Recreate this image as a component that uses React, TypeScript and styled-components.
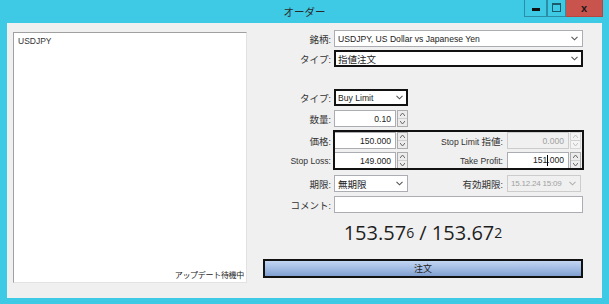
import React from "react";
import styled, { createGlobalStyle } from "styled-components";

const GlobalStyle = createGlobalStyle`
  html, body {
    margin: 0;
    padding: 0;
    background: #ffffff;
  }
  body {
    font-family: "Liberation Sans", "Noto Sans CJK JP", sans-serif;
    font-size: 8.6px;
    color: #333;
  }
`;

const Window = styled.div`
  width: 609px;
  height: 304px;
  box-sizing: border-box;
  background: #3ec9e5;
  display: flex;
  flex-direction: column;
  padding: 0 7px 6px 7px;
`;

const TitleBar = styled.div`
  height: 23px;
  display: flex;
  align-items: flex-start;
  position: relative;
`;

const Title = styled.div`
  flex: 1;
  text-align: center;
  line-height: 24px;
  font-size: 10.5px;
  color: #2a2a2a;
  font-family: "Noto Sans CJK JP", sans-serif;
`;

const Controls = styled.div`
  position: absolute;
  right: -1px;
  top: 0;
  display: flex;
  height: 17px;
`;

const CtrlButton = styled.div<{ $w: number; $close?: boolean }>`
  width: ${(p) => p.$w}px;
  height: 17px;
  box-sizing: border-box;
  border: 1px solid ${(p) => (p.$close ? "#b5453f" : "#2a8ea6")};
  border-top: none;
  border-left: ${(p) => (p.$close ? "none" : "1px solid #2a8ea6")};
  background: ${(p) => (p.$close ? "#c9534d" : "#3ec9e5")};
  display: flex;
  align-items: center;
  justify-content: center;
  color: #1a1a1a;
  font-weight: bold;
  font-size: 11px;
  padding-bottom: 1px;
`;

const MinBar = styled.div`
  width: 8px;
  height: 3px;
  background: #111;
  margin-top: 4px;
`;

const MaxBox = styled.div`
  width: 7px;
  height: 6px;
  border: 1px solid #1a5c6c;
  border-top-width: 2px;
`;

const Body = styled.div`
  flex: 1;
  background: #f0f0f0;
  display: flex;
  padding: 9px 19px 0 6px;
`;

const QuotePanel = styled.div`
  width: 234px;
  height: 251px;
  box-sizing: border-box;
  background: #ffffff;
  border: 1px solid #e2e2e2;
  border-top-color: #a0a0a0;
  border-left-color: #a0a0a0;
  display: flex;
  flex-direction: column;
  justify-content: space-between;
  padding: 3px 2px 2px 4px;
`;

const Symbol = styled.div`
  font-size: 8.5px;
  color: #333;
`;

const Status = styled.div`
  align-self: flex-end;
  font-size: 8px;
  color: #222;
  font-family: "Noto Sans CJK JP", sans-serif;
  letter-spacing: -0.3px;
`;

const Jp = styled.span`
  font-family: "Noto Sans CJK JP", sans-serif;
  font-size: 9.5px;
`;

const Form = styled.div`
  margin-left: 16px;
  margin-top: -2px;
  width: 320px;
  display: flex;
  flex-direction: column;
`;

const Row = styled.div<{ $mt?: number }>`
  display: flex;
  align-items: center;
  height: 17px;
  margin-top: ${(p) => p.$mt ?? 0}px;
`;

const Label = styled.div<{ $w?: number }>`
  width: ${(p) => p.$w ?? 71}px;
  flex: none;
  box-sizing: border-box;
  padding-right: ${(p) => (p.$w ? 4 : 3)}px;
  text-align: right;
  white-space: nowrap;
  color: #333;
`;

const Field = styled.div<{ $w?: number; $focus?: boolean; $disabled?: boolean }>`
  width: ${(p) => (p.$w ? `${p.$w}px` : "auto")};
  flex: ${(p) => (p.$w ? "none" : "1")};
  height: 17px;
  box-sizing: border-box;
  border: ${(p) => (p.$focus ? "2px solid #111" : p.$disabled ? "1px solid #cccccc" : "1px solid #abadb3")};
  background: ${(p) => (p.$disabled ? "#f0f0f0" : "#ffffff")};
  color: ${(p) => (p.$disabled ? "#a0a0a0" : "#222")};
  display: flex;
  align-items: center;
  padding: 0 ${(p) => (p.$focus ? 3 : 4)}px 0 ${(p) => (p.$focus ? 2 : 3)}px;
  white-space: nowrap;
  overflow: hidden;
`;

const FieldText = styled.span<{ $right?: boolean; $tight?: boolean }>`
  flex: 1;
  text-align: ${(p) => (p.$right ? "right" : "left")};
  font-size: ${(p) => (p.$tight ? "8px" : "inherit")};
  letter-spacing: ${(p) => (p.$tight ? "-0.2px" : "0")};
`;

const Caret = styled.span`
  display: inline-block;
  width: 1px;
  height: 11px;
  background: #000;
  vertical-align: middle;
  margin: 0 -1px 0 0;
`;

const Spin = styled.div`
  display: flex;
  align-items: center;
  flex: none;
`;

const SpinButtons = styled.div<{ $disabled?: boolean }>`
  width: 11px;
  height: 17px;
  margin-left: 1px;
  display: flex;
  flex-direction: column;
  box-sizing: border-box;
  border: 1px solid ${(p) => (p.$disabled ? "#d6d6d6" : "#acacac")};
  background: ${(p) => (p.$disabled ? "#f4f4f4" : "#ececec")};
`;

const SpinHalf = styled.div`
  flex: 1;
  display: flex;
  align-items: center;
  justify-content: center;
  & + & {
    border-top: 1px solid #d0d0d0;
  }
`;

const Group = styled.div`
  position: relative;
  margin-top: 5px;
  &::after {
    content: "";
    position: absolute;
    left: 70px;
    right: -1px;
    top: -2px;
    bottom: -1px;
    border: 2px solid #111;
    pointer-events: none;
  }
`;

const Price = styled.div`
  margin-top: 4px;
  height: 30px;
  display: flex;
  align-items: center;
  justify-content: center;
  font-family: "Open Sans", "Noto Sans", sans-serif;
  font-size: 20px;
  color: #1e1e1e;
  white-space: pre;
`;

const Small = styled.span`
  font-size: 14px;
`;

const OrderButton = styled.div`
  margin-top: 12px;
  height: 19px;
  box-sizing: border-box;
  border: 2px solid #111;
  background: linear-gradient(#c3d6f2 0%, #a2bce4 50%, #809fd0 100%);
  display: flex;
  align-items: center;
  justify-content: center;
  font-family: "Noto Sans CJK JP", sans-serif;
  font-size: 9px;
  color: #222;
`;

const Chevron = ({ color = "#555" }: { color?: string }) => (
  <svg width="7" height="5" viewBox="0 0 7 5">
    <path d="M0.5 0.8 L3.5 3.8 L6.5 0.8" fill="none" stroke={color} strokeWidth="1.1" />
  </svg>
);

const Arrow = ({ up, color = "#777" }: { up?: boolean; color?: string }) => (
  <svg width="5" height="3" viewBox="0 0 5 3">
    <path d={up ? "M0 3 L2.5 0 L5 3" : "M0 0 L2.5 3 L5 0"} fill="none" stroke={color} strokeWidth="1" />
  </svg>
);

const Select = ({
  children,
  w,
  focus,
  disabled,
}: {
  children: React.ReactNode;
  w?: number;
  focus?: boolean;
  disabled?: boolean;
}) => (
  <Field $w={w} $focus={focus} $disabled={disabled}>
    <FieldText $tight={disabled}>{children}</FieldText>
    <Chevron color={disabled ? "#b0b0b0" : "#555"} />
  </Field>
);

const Number = ({ children, disabled }: { children: React.ReactNode; disabled?: boolean }) => (
  <Spin>
    <Field $w={62} $disabled={disabled}>
      <FieldText $right>{children}</FieldText>
    </Field>
    <SpinButtons $disabled={disabled}>
      <SpinHalf>
        <Arrow up color={disabled ? "#c0c0c0" : "#666"} />
      </SpinHalf>
      <SpinHalf>
        <Arrow color={disabled ? "#c0c0c0" : "#666"} />
      </SpinHalf>
    </SpinButtons>
  </Spin>
);

export default function App() {
  return (
    <>
      <GlobalStyle />
      <Window>
        <TitleBar>
          <Title>オーダー</Title>
          <Controls>
            <CtrlButton $w={23}>
              <MinBar />
            </CtrlButton>
            <CtrlButton $w={19}>
              <MaxBox />
            </CtrlButton>
            <CtrlButton $w={37} $close>
              x
            </CtrlButton>
          </Controls>
        </TitleBar>
        <Body>
          <QuotePanel>
            <Symbol>USDJPY</Symbol>
            <Status>アップデート待機中</Status>
          </QuotePanel>
          <Form>
            <Row>
              <Label>
                <Jp>銘柄</Jp>:
              </Label>
              <Select>USDJPY, US Dollar vs Japanese Yen</Select>
            </Row>
            <Row $mt={3}>
              <Label>
                <Jp>タイプ</Jp>:
              </Label>
              <Select focus>
                <Jp>指値注文</Jp>
              </Select>
            </Row>
            <Row $mt={22}>
              <Label>
                <Jp>タイプ</Jp>:
              </Label>
              <Select w={74} focus>
                Buy Limit
              </Select>
            </Row>
            <Row $mt={4}>
              <Label>
                <Jp>数量</Jp>:
              </Label>
              <Number>0.10</Number>
            </Row>
            <Group>
              <Row>
                <Label>
                  <Jp>価格</Jp>:
                </Label>
                <Number>150.000</Number>
                <Label $w={99}>
                  Stop Limit <Jp>指値</Jp>:
                </Label>
                <Number disabled>0.000</Number>
              </Row>
              <Row $mt={3}>
                <Label>Stop Loss:</Label>
                <Number>149.000</Number>
                <Label $w={99}>Take Profit:</Label>
                <Number>
                  151
                  <Caret />
                  .000
                </Number>
              </Row>
            </Group>
            <Row $mt={6}>
              <Label>
                <Jp>期限</Jp>:
              </Label>
              <Select w={74}>
                <Jp>無期限</Jp>
              </Select>
              <Label $w={99}>
                <Jp>有効期限</Jp>:
              </Label>
              <Select w={74} disabled>
                15.12.24 15:09
              </Select>
            </Row>
            <Row $mt={4}>
              <Label>
                <Jp>コメント</Jp>:
              </Label>
              <Field />
            </Row>
            <Price>
              153.57<Small>6</Small> / 153.67<Small>2</Small>
            </Price>
            <OrderButton>注文</OrderButton>
          </Form>
        </Body>
      </Window>
    </>
  );
}
